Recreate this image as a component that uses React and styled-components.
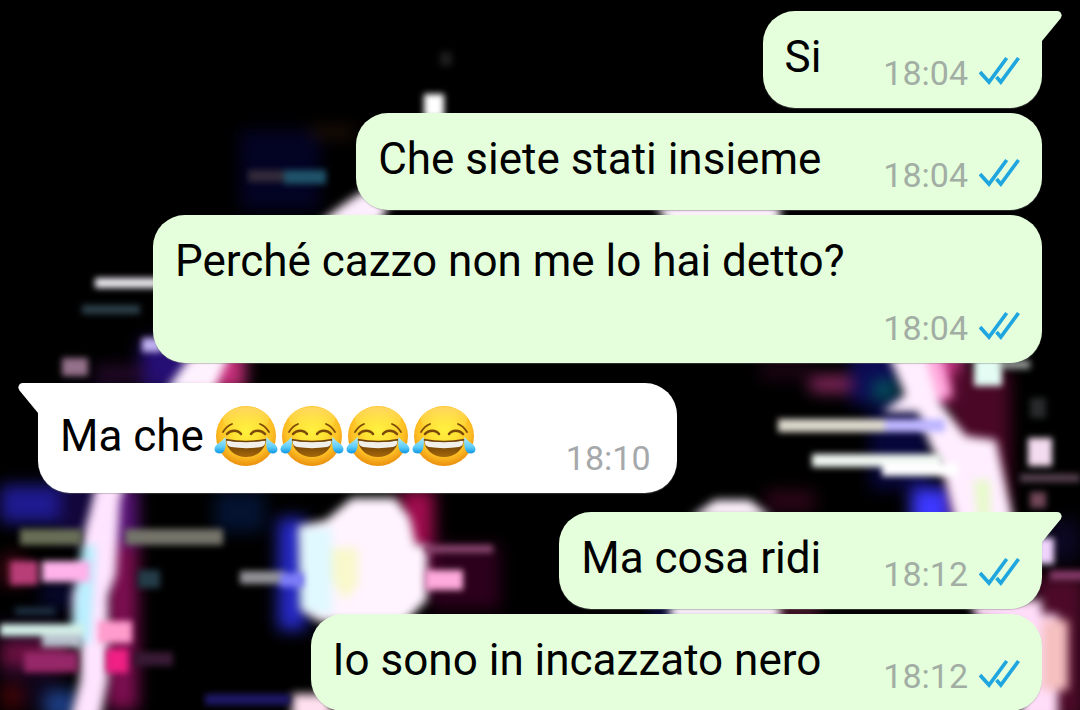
import React from 'react';
import styled, {createGlobalStyle} from 'styled-components';

const colors = {
  sent: '#e5ffdc',
  received: '#ffffff',
  text: '#000000',
  time: '#a6a9ab',
  sentTime: '#a2aea4',
  read: '#20a6df',
};

const GlobalStyle = createGlobalStyle`
  body {
    margin: 0;
    background: #000;
    font-family: Roboto, sans-serif;
  }
`;

const Page = styled.div`
  position: relative;
  height: 100vh;
  overflow: hidden;
`;

const Backdrop = styled.svg`
  position: absolute;
  top: 0;
  left: 0;
  width: 100%;
  height: 100%;
`;

const Blurred = styled.g`
  filter: blur(${props => props.$radius}px);
`;

const Conversation = styled.main`
  position: relative;
  height: 100%;
  box-sizing: border-box;
  padding: 11px 38px 0;
  overflow-y: auto;
  scrollbar-width: none;
`;

const Group = styled.section`
  display: flex;
  flex-direction: column;
  align-items: ${props => (props.$sent ? 'flex-end' : 'flex-start')};
  gap: 5px;
  margin-bottom: ${props => (props.$sent ? 20 : 19)}px;
`;

const Bubble = styled.article`
  position: relative;
  display: flex;
  flex-wrap: wrap;
  justify-content: space-between;
  align-items: flex-end;
  box-sizing: border-box;
  max-width: calc(100% - 115px);
  gap: 11px ${props => (props.$sent ? 62 : 88)}px;
  padding: 20px ${props => (props.$sent ? 21 : 26)}px 15px 22px;
  border-radius: 32px;
  border-top-right-radius: ${props => (props.$sent && props.$tail ? 0 : 32)}px;
  border-top-left-radius: ${props => (!props.$sent && props.$tail ? 0 : 32)}px;
  background: ${props => (props.$sent ? colors.sent : colors.received)};
  box-shadow: 0 1px 1px rgba(120, 120, 120, 0.4);
`;

const TailShape = styled.svg`
  position: absolute;
  top: 0;
  ${props => (props.$sent ? 'left: 100%;' : 'right: 100%; transform: scaleX(-1);')}
  width: 20px;
  height: 30px;
  fill: ${props => (props.$sent ? colors.sent : colors.received)};
`;

const Message = styled.p`
  display: flex;
  align-items: center;
  margin: 0 0 10px;
  font-size: 44px;
  line-height: 52px;
  color: ${colors.text};
`;

const Emojis = styled.span`
  display: flex;
  margin-left: 10px;
`;

const EmojiShape = styled.svg`
  width: 66px;
  height: 65px;
`;

const Meta = styled.div`
  display: flex;
  align-items: center;
  gap: 11px;
  margin-left: auto;
  font-size: 34px;
  line-height: 40px;
  color: ${props => (props.$sent ? colors.sentTime : colors.time)};
`;

const TickShape = styled.svg`
  width: 42px;
  height: 30px;
  margin-bottom: 4px;
  fill: none;
  stroke: ${colors.read};
  stroke-width: 3.7;
`;

const Tail = ({sent}) => (
  <TailShape $sent={sent} viewBox="0 0 20 30" aria-hidden="true">
    <path d="M-1 0H15C19 0 21 4 18.500 7.500L0 30H-1Z" />
  </TailShape>
);

const Ticks = () => (
  <TickShape viewBox="0 0 42 30" role="img" aria-label="Letto">
    <path d="M1 16 10 26 27.700 2" />
    <path d="M17.500 21 21.800 26 39.500 2" />
  </TickShape>
);

const EmojiDefs = () => (
  <defs>
    <radialGradient id="face" cx="0.5" cy="0.4" r="0.6">
      <stop offset="0" stopColor="#fff23e" />
      <stop offset="0.4" stopColor="#ffe032" />
      <stop offset="0.75" stopColor="#fdbd24" />
      <stop offset="1" stopColor="#ea8f0e" />
    </radialGradient>
    <linearGradient id="shine" x1="0" y1="0" x2="0" y2="1">
      <stop offset="0" stopColor="#ffd866" stopOpacity="0.9" />
      <stop offset="1" stopColor="#fff04a" stopOpacity="0" />
    </linearGradient>
    <linearGradient id="mouth" x1="0" y1="0" x2="0" y2="1">
      <stop offset="0" stopColor="#5e3306" />
      <stop offset="1" stopColor="#a5690a" />
    </linearGradient>
    <linearGradient id="tear" x1="0" y1="0" x2="0" y2="1">
      <stop offset="0" stopColor="#b5ecff" />
      <stop offset="0.6" stopColor="#5fcdf9" />
      <stop offset="1" stopColor="#0c95e4" />
    </linearGradient>
  </defs>
);

const Joy = () => (
  <EmojiShape viewBox="0 0 66 65" aria-hidden="true">
    <circle cx="32" cy="33" r="30" fill="url(#face)" />
    <ellipse cx="32" cy="16.500" rx="23" ry="12.500" fill="url(#shine)" />
    <g fill="none" stroke="#7b4a08" strokeLinecap="round">
      <path d="M9 29C11.500 25 14 22.500 18 21" strokeWidth="1.800" />
      <path d="M55 29C52.500 25 50 22.500 46 21" strokeWidth="1.800" />
      <path d="M13 31C16.500 26.500 24 26.500 27 31" strokeWidth="2.500" />
      <path d="M51 31C47.500 26.500 40 26.500 37 31" strokeWidth="2.500" />
    </g>
    <path d="M12 37C25 39 39 39 52 37C51 47 43 54 32 54S13 47 12 37Z" fill="url(#mouth)" />
    <path d="M12.500 37.500C25 39.500 39 39.500 51.500 37.500C51.500 41 50 43.500 47 44C37 45.500 27 45.500 17 44C14 43.500 12.500 41 12.500 37.500Z" fill="#f1efea" />
    <path d="M11.500 36.500C25 39 39 39 52.500 36.500" fill="none" stroke="#70420a" strokeWidth="1.500" />
    <path d="M11.500 34C12.500 42 11.500 50.500 5.500 50.500C-.5 50.500-1 44.500 3.500 41C6.500 39 9 37 11.500 34Z" fill="url(#tear)" />
    <path d="M52.500 34C51.500 42 52.500 50.500 58.500 50.500C64.500 50.500 65 44.500 60.500 41C57.500 39 55 37 52.500 34Z" fill="url(#tear)" />
  </EmojiShape>
);

// x, y, width, height, colour
const glow = [
  [0, 485, 115, 38, '#1f1a90'],
  [60, 390, 60, 150, '#12063a'],
  [40, 580, 60, 30, '#060728'],
  [140, 340, 60, 50, '#250e74'],
  [195, 350, 50, 40, '#c8307c'],
  [0, 620, 60, 90, '#0c0418'],
  [0, 640, 70, 28, '#6a1040'],
  [0, 555, 26, 30, '#400a14'],
  [0, 682, 24, 28, '#3a0408'],
  [44, 690, 34, 30, '#1c3c80'],
  [104, 485, 34, 60, '#5a1478'],
  [106, 545, 32, 165, '#7c0e50'],
  [215, 492, 50, 40, '#041230'],
  [278, 518, 28, 112, '#262ac8'],
  [400, 490, 34, 60, '#a00c4e'],
  [420, 545, 56, 46, '#7a0048'],
  [430, 545, 70, 64, '#2c001c'],
  [240, 130, 80, 80, '#030324'],
  [310, 128, 44, 8, '#2a1608'],
  [850, 350, 50, 55, '#0b0a54'],
  [872, 380, 26, 24, '#04505a'],
  [870, 400, 60, 90, '#07063a'],
  [911, 488, 50, 40, '#3c38ff'],
  [928, 350, 36, 54, '#d03a8c'],
  [950, 370, 60, 150, '#4a0826'],
  [810, 376, 42, 16, '#8a2860'],
  [765, 490, 50, 22, '#2a0616'],
  [1035, 575, 50, 145, '#4c0a28'],
  [1045, 520, 35, 40, '#0c0722'],
  [95, 366, 50, 16, '#260a2c'],
  [760, 360, 50, 20, '#1a0412'],
  [770, 606, 50, 12, '#6a2040'],
  [650, 606, 30, 12, '#101468'],
];

const streaks = [
  [424, 94, 20, 24, '#ffffff'],
  [440, 52, 12, 14, '#1c1c1c'],
  [248, 170, 42, 12, '#332a3a'],
  [284, 170, 42, 14, '#1f536a'],
  [95, 278, 70, 10, '#eeeaf2'],
  [82, 305, 58, 9, '#2c404a'],
  [142, 338, 20, 14, '#c0b0f0'],
  [62, 358, 26, 18, '#94708a'],
  [20, 529, 62, 16, '#686e56'],
  [125, 529, 98, 16, '#74746a'],
  [10, 561, 28, 24, '#b83e78'],
  [42, 561, 48, 21, '#ffb2ea'],
  [0, 624, 84, 12, '#d4f0e8'],
  [42, 635, 40, 12, '#b8c0cc'],
  [98, 621, 34, 22, '#ff9ccc'],
  [106, 649, 22, 24, '#f02084'],
  [24, 652, 54, 20, '#962868'],
  [135, 652, 38, 14, '#381a34'],
  [15, 607, 40, 8, '#1c2e40'],
  [138, 570, 22, 18, '#243c48'],
  [240, 571, 46, 13, '#909096'],
  [280, 573, 24, 14, '#7c7cf8'],
  [425, 545, 68, 8, '#8a4670'],
  [425, 570, 38, 20, '#ffaadc'],
  [778, 419, 150, 13, '#dcd8cc'],
  [885, 419, 60, 13, '#beb6ff'],
  [812, 454, 130, 13, '#f0f8f2'],
  [882, 463, 76, 13, '#ffffff'],
  [974, 356, 28, 30, '#e4fcf4'],
  [1000, 360, 30, 9, '#909492'],
  [1028, 438, 24, 28, '#f4dcf0'],
  [1020, 474, 60, 8, '#584250'],
  [1030, 492, 16, 16, '#704656'],
  [1030, 398, 16, 20, '#282a2c'],
  [1036, 538, 18, 26, '#f0d4ff'],
  [1050, 571, 36, 9, '#883c6c'],
  [205, 694, 85, 11, '#1e1868'],
];

const Wallpaper = () => (
  <Backdrop viewBox="0 0 1080 710" preserveAspectRatio="xMidYMid slice" aria-hidden="true">
    <EmojiDefs />
    <rect width="1080" height="710" />
    <Blurred $radius={8}>
      {glow.map(([x, y, width, height, fill]) => (
        <rect key={`${x}-${y}`} x={x} y={y} width={width} height={height} fill={fill} />
      ))}
    </Blurred>
    <Blurred $radius={5}>
      {/* the big ring */}
      <path d="M318 224C338 208 348 200 366 190H395L380 224Z" fill="#fdeefd" />
      <path d="M655 204H780V224H668Z" fill="#fff4ff" />
      <path d="M195 350H232L214 390H166Z" fill="#fff2ff" />
      <path d="M98 476H128L120 500L116 575L108 596V680L100 720H70L80 680V640L72 630V595L82 560V540L90 510Z" fill="#ffe4ff" />
      <path d="M82 545H96L90 645L74 640L72 625L76 595Z" fill="#b8f0ff" />
      <path d="M922 350H940L952 396L930 402Z" fill="#ffa8dc" />
      <path d="M884 345H922L938 400L966 436L996 440L1014 524H956L944 475L928 440L918 412H882L905 395Z" fill="#ffeeff" />
      <path d="M974 480H990V520H978Z" fill="#e6fbc8" />
      <path d="M970 600H1042V614H1058V720H1020V625L976 618Z" fill="#ffdcf8" />
      <path d="M1042 620H1068V690H1042Z" fill="#f6c0c0" />
      {/* the eyes */}
      <path d="M298 526L326 520L352 498H395L410 518L416 545H427V600L405 622H320L300 610Z" fill="#fff4ff" />
      <path d="M300 528H332V614H318L300 608Z" fill="#e0f8ff" />
      <path d="M332 548H358V585L345 600L332 580Z" fill="#f8f8cc" />
      <path d="M690 518L715 500H750L772 518Z" fill="#fff4ff" />
      <path d="M670 602H780V620H670Z" fill="#fff4ff" />
      <rect x="292" y="694" width="40" height="26" fill="#ffe0f0" />
    </Blurred>
    <Blurred $radius={3}>
      {streaks.map(([x, y, width, height, fill]) => (
        <rect key={`${x}-${y}`} x={x} y={y} width={width} height={height} fill={fill} />
      ))}
    </Blurred>
  </Backdrop>
);

const groups = [
  {
    sent: true,
    messages: [
      {text: 'Si', time: '18:04'},
      {text: 'Che siete stati insieme', time: '18:04'},
      {text: 'Perché cazzo non me lo hai detto?', time: '18:04'},
    ],
  },
  {
    sent: false,
    messages: [{text: 'Ma che', laughs: 4, time: '18:10'}],
  },
  {
    sent: true,
    messages: [
      {text: 'Ma cosa ridi', time: '18:12'},
      {text: 'Io sono in incazzato nero', time: '18:12'},
    ],
  },
];

const ChatBubble = ({sent, tail, text, laughs, time}) => (
  <Bubble $sent={sent} $tail={tail}>
    {tail && <Tail sent={sent} />}
    <Message>
      {text}
      {laughs && (
        <Emojis role="img" aria-label={'😂'.repeat(laughs)}>
          {Array.from({length: laughs}, (_, index) => <Joy key={index} />)}
        </Emojis>
      )}
    </Message>
    <Meta $sent={sent}>
      <time dateTime={time}>{time}</time>
      {sent && <Ticks />}
    </Meta>
  </Bubble>
);

export default function App() {
  return (
    <Page>
      <GlobalStyle />
      <Wallpaper />
      <Conversation>
        {groups.map((group, groupIndex) => (
          <Group key={groupIndex} $sent={group.sent}>
            {group.messages.map((message, index) => (
              <ChatBubble
                key={message.text}
                sent={group.sent}
                tail={index === 0}
                {...message}
              />
            ))}
          </Group>
        ))}
      </Conversation>
    </Page>
  );
}
